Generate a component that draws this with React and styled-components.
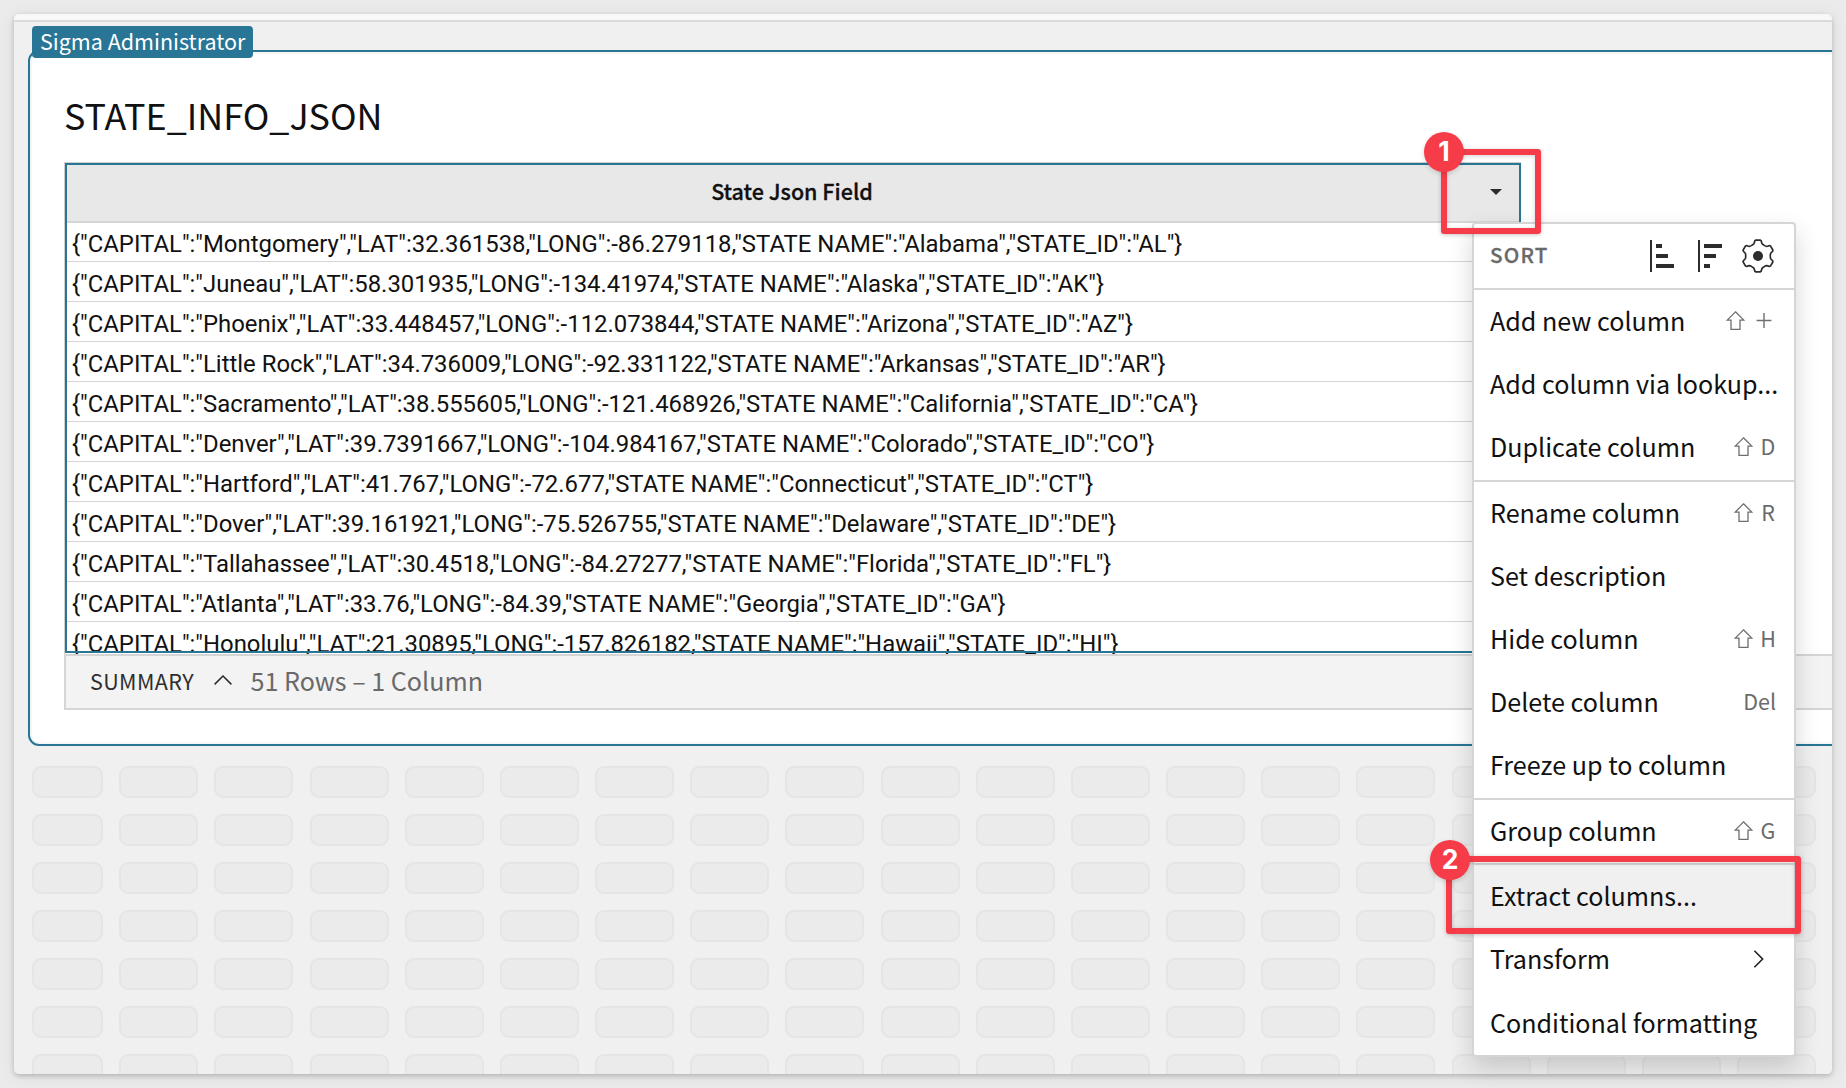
import React from "react";
import styled, { createGlobalStyle, css } from "styled-components";

const teal = "#287596";
const line = "#d5d5d5";
const red = "#f73c49";
const uiFont = '"Noto Sans CJK SC", "Noto Sans", sans-serif';

const GlobalStyle = createGlobalStyle`
  * { box-sizing: border-box; }
  body { margin: 0; background: #ebebeb; font-family: ${uiFont}; color: #111; }
  svg { display: block; flex: none; }
`;

const Stage = styled.div`
  position: relative;
  width: 1846px;
  height: 1088px;
  padding: 14px;
  overflow: hidden;
  background: #ebebeb;
`;

const Workspace = styled.main`
  isolation: isolate;
  height: 1060px;
  border-radius: 5px;
  overflow: hidden;
  background: #f0f0f0;
`;

const WorkspaceShadow = styled.div`
  width: 1818px;
  border-radius: 5px;
  box-shadow: 0 2px 5px rgba(0, 0, 0, 0.2), 0 2px 18px rgba(0, 0, 0, 0.07);
`;

const TopStrip = styled.div`
  height: 8px;
  background: #f8f8f8;
  border-bottom: 2px solid #dadada;
`;

const Element = styled.section`
  position: relative;
  height: 696px;
  margin: 28px -20px 20px 14px;
  padding: 37px 0 0 34px;
  border: 2px solid ${teal};
  border-radius: 11px;
  background: #fff;
  box-shadow: inset 0 0 0 2px #f5f6f6;
`;

const UserTag = styled.div`
  position: absolute;
  left: 2px;
  top: -26px;
  width: 221px;
  height: 32px;
  padding: 0 0 3px 8px;
  border-radius: 4px;
  background: ${teal};
  color: #fff;
  font-size: 21.5px;
  line-height: 29px;
  white-space: nowrap;
`;

const Title = styled.h1`
  margin: 0 0 23px;
  font-size: 35.9px;
  font-weight: 400;
  line-height: 50px;
`;

const Table = styled.div`
  position: relative;
  height: 492px;
  width: 1457px;
  padding: 2px 2px 0;
  border-left: 1px solid #cfcfcf;
  border-top: 1px solid #cfcfcf;
  overflow: hidden;

  &::after {
    content: "";
    position: absolute;
    inset: 0 0 1px 0;
    border: 2px solid ${teal};
  }
`;

const HeaderCell = styled.div`
  position: relative;
  z-index: 1;
  display: flex;
  align-items: center;
  height: 58px;
  padding: 0 17px 2px 27px;
  border-bottom: 2px solid ${line};
  background: #e8e8e8;
`;

const HeaderText = styled.div`
  flex: 1;
  padding-bottom: 3px;
  text-align: center;
  font-size: 21.5px;
  font-weight: 500;
  -webkit-text-stroke: 0.3px #111;
`;

const Rows = styled.div`
  margin-top: -1px;
`;

const Row = styled.div`
  height: 40px;
  padding: 7px 0 2px 5px;
  border-bottom: 1px solid ${line};
  font-family: Roboto, sans-serif;
  font-size: 23.9px;
  line-height: 30px;
  white-space: nowrap;
`;

const SummaryBar = styled.div`
  display: flex;
  align-items: center;
  height: 56px;
  padding: 0 0 4px 24px;
  border: 2px solid ${line};
  background: #f3f3f3;
  white-space: nowrap;
`;

const SummaryLabel = styled.span`
  width: 124px;
  color: #2e2e2e;
  font-size: 21.5px;
  letter-spacing: 0.4px;
`;

const SummaryCount = styled.span`
  margin-left: 18.5px;
  color: #696969;
  font-size: 25.1px;
`;

const Grid = styled.div`
  display: grid;
  grid-template-columns: 71px repeat(18, 79px);
  grid-auto-rows: 32px;
  gap: 16px 16.18px;
  padding-left: 18px;
`;

const Slot = styled.div`
  border: 2px solid #e5e5e5;
  border-radius: 9px;
  background: #ebebeb;
`;

const Menu = styled.nav`
  position: absolute;
  left: 1472px;
  top: 222px;
  width: 324px;
  border: 2px solid ${line};
  border-radius: 4px;
  background: #fff;
  box-shadow: 0 10px 24px rgba(0, 0, 0, 0.16);
`;

const MenuHead = styled.div`
  display: flex;
  align-items: center;
  height: 64px;
  padding: 0 19px 0 16px;
`;

const SortLabel = styled.span`
  flex: 1;
  padding-bottom: 4px;
  color: #696969;
  font-size: 20.6px;
  font-weight: 500;
  letter-spacing: 1.2px;
  -webkit-text-stroke: 0.3px #696969;
`;

const SortIcons = styled.div`
  display: flex;
  align-items: center;
  margin-right: -5px;
`;

const Group = styled.div`
  border-top: 2px solid ${line};
  padding-bottom: ${(p) => p.$bottom}px;
`;

const Item = styled.div`
  display: flex;
  align-items: center;
  justify-content: space-between;
  height: ${(p) => (p.$tall ? 64 : 63)}px;
  padding: ${(p) => (p.$tall ? 1 : 0)}px 18px 3px 16px;
  font-size: 25.1px;
  line-height: 36px;
  white-space: nowrap;
  ${(p) => p.$active && css`background: #f0f0f0;`}
`;

const Shortcut = styled.span`
  display: flex;
  align-items: center;
  gap: 7px;
  color: #6b6b6b;
  font-size: 21.5px;
  line-height: 30px;
`;

const Key = styled.span`
  display: flex;
  justify-content: center;
  width: ${(p) => p.$width || "auto"};
`;

const SubmenuMark = styled.span`
  padding: 2px 12px 0 0;
`;

const Callout = styled.div`
  position: absolute;
  left: ${(p) => p.$x}px;
  top: ${(p) => p.$y}px;
  width: ${(p) => p.$w}px;
  height: ${(p) => p.$h}px;
  border: 6px solid ${red};
  border-radius: 3px;
  box-shadow: 0 1px 4px rgba(0, 0, 0, 0.22), inset 0 1px 4px rgba(0, 0, 0, 0.18);
`;

const Badge = styled.span`
  position: absolute;
  left: ${(p) => p.$dx}px;
  top: ${(p) => p.$dy}px;
  display: flex;
  align-items: center;
  justify-content: center;
  width: 40px;
  height: 40px;
  padding-bottom: 2px;
  border-radius: 50%;
  background: ${red};
  box-shadow: 0 2px 5px rgba(0, 0, 0, 0.15);
  color: #fff;
  font: 700 26.5px/38px Inter, sans-serif;
`;

function SortIcon({ widths }) {
  return (
    <svg width="48" height="32" viewBox="0 0 48 32" fill="#2c2c2c">
      <rect width="2" height="32" />
      {widths.map((w, i) => (
        <rect key={i} x="6" y={4 + i * 10} width={w} height="4" />
      ))}
    </svg>
  );
}

const polar = (r, deg) => {
  const a = (deg * Math.PI) / 180;
  return `${(r * Math.cos(a)).toFixed(2)} ${(r * Math.sin(a)).toFixed(2)}`;
};

const gearPath =
  [0, 1, 2, 3, 4, 5]
    .map((k) => {
      const c = -90 + k * 60;
      return `${k ? "L" : "M"}${polar(13, c - 18)} Q${polar(14, c - 15)} ${polar(14.4, c - 14)} Q${polar(15.8, c - 13)} ${polar(16, c - 8)} L${polar(16, c + 8)} Q${polar(15.8, c + 13)} ${polar(14.4, c + 14)} Q${polar(14, c + 15)} ${polar(13, c + 18)} Q${polar(12.4, c + 21)} ${polar(12.3, c + 30)} Q${polar(12.4, c + 39)} ${polar(13, c + 42)}`;
    })
    .join(" ") + "Z";

const GearIcon = () => (
  <svg width="34" height="34" viewBox="-17 -17 34 34">
    <path d={gearPath} fill="none" stroke="#2c2c2c" strokeWidth="1.7" strokeLinejoin="round" />
    <circle r="5" fill="#2c2c2c" />
  </svg>
);

const ShiftIcon = () => (
  <svg width="19" height="20" viewBox="0 -0.5 19 20" fill="none" stroke="#6f6f6f" strokeWidth="1.3">
    <path d="M9.5 1.3 L17.8 9.6 H14 V18.8 H5 V9.6 H1.2 Z" />
  </svg>
);

const PlusIcon = () => (
  <svg width="16" height="16" viewBox="0 -0.5 16 16" stroke="#6f6f6f" strokeWidth="1.4">
    <path d="M8 .6V15.4M.6 8H15.4" />
  </svg>
);

const groups = [
  {
    bottom: 1,
    items: [
      { label: "Add new column", key: "+" },
      { label: "Add column via lookup..." },
      { label: "Duplicate column", key: "D" },
    ],
  },
  {
    bottom: 1,
    items: [
      { label: "Rename column", key: "R" },
      { label: "Set description" },
      { label: "Hide column", key: "H" },
      { label: "Delete column", key: "Del" },
      { label: "Freeze up to column" },
    ],
  },
  { bottom: 0, items: [{ label: "Group column", key: "G" }] },
  {
    bottom: 0,
    items: [
      { label: "Extract columns...", active: true },
      { label: "Transform", submenu: true },
      { label: "Conditional formatting", tall: true },
    ],
  },
];

const rows = [
  ["Montgomery", "32.361538", "-86.279118", "Alabama", "AL"],
  ["Juneau", "58.301935", "-134.41974", "Alaska", "AK"],
  ["Phoenix", "33.448457", "-112.073844", "Arizona", "AZ"],
  ["Little Rock", "34.736009", "-92.331122", "Arkansas", "AR"],
  ["Sacramento", "38.555605", "-121.468926", "California", "CA"],
  ["Denver", "39.7391667", "-104.984167", "Colorado", "CO"],
  ["Hartford", "41.767", "-72.677", "Connecticut", "CT"],
  ["Dover", "39.161921", "-75.526755", "Delaware", "DE"],
  ["Tallahassee", "30.4518", "-84.27277", "Florida", "FL"],
  ["Atlanta", "33.76", "-84.39", "Georgia", "GA"],
  ["Honolulu", "21.30895", "-157.826182", "Hawaii", "HI"],
];

function ItemShortcut({ value }) {
  if (value === "Del") {
    return <Shortcut>Del</Shortcut>;
  }
  return (
    <Shortcut>
      <ShiftIcon />
      <Key $width={value === "+" ? "24px" : "16px"}>{value === "+" ? <PlusIcon /> : value}</Key>
    </Shortcut>
  );
}

export default function App() {
  return (
    <>
      <GlobalStyle />
      <Stage>
        <WorkspaceShadow>
          <Workspace>
            <TopStrip />
            <Element>
              <UserTag>Sigma Administrator</UserTag>
              <Title>STATE_INFO_JSON</Title>
              <Table>
                <HeaderCell>
                  <HeaderText>State Json Field</HeaderText>
                  <svg width="12" height="6" viewBox="0 0 12 6">
                    <path d="M0 0H12L6 6Z" fill="#2c2c2c" />
                  </svg>
                </HeaderCell>
                <Rows>
                  {rows.map(([capital, lat, long, state, id]) => (
                    <Row key={id}>
                      {`{"CAPITAL":"${capital}","LAT":${lat},"LONG":${long},"STATE NAME":"${state}","STATE_ID":"${id}"}`}
                    </Row>
                  ))}
                </Rows>
              </Table>
              <SummaryBar>
                <SummaryLabel>SUMMARY</SummaryLabel>
                <svg width="18" height="10" viewBox="0 0 18 10" fill="none" stroke="#2c2c2c" strokeWidth="1.5">
                  <path d="M.6 9.4L9 1L17.4 9.4" />
                </svg>
                <SummaryCount>51 Rows – 1 Column</SummaryCount>
              </SummaryBar>
            </Element>
            <Grid>
              {Array.from({ length: 19 * 7 }, (_, i) => (
                <Slot key={i} />
              ))}
            </Grid>
          </Workspace>
        </WorkspaceShadow>

        <Menu>
          <MenuHead>
            <SortLabel>SORT</SortLabel>
            <SortIcons>
              <SortIcon widths={[6, 12, 18]} />
              <SortIcon widths={[18, 12, 6]} />
            </SortIcons>
            <GearIcon />
          </MenuHead>
          {groups.map((group, g) => (
            <Group key={g} $bottom={group.bottom}>
              {group.items.map((item) => (
                <Item key={item.label} $active={item.active} $tall={item.tall}>
                  {item.label}
                  {item.key && <ItemShortcut value={item.key} />}
                  {item.submenu && (
                    <SubmenuMark>
                      <svg width="11" height="18" viewBox="0 0 11 18" fill="none" stroke="#222" strokeWidth="1.6">
                        <path d="M1.4 .8L9.6 9L1.4 17.2" />
                      </svg>
                    </SubmenuMark>
                  )}
                </Item>
              ))}
            </Group>
          ))}
        </Menu>

        <Callout $x={1441} $y={149} $w={100} $h={85}>
          <Badge $dx={-23} $dy={-23}>1</Badge>
        </Callout>
        <Callout $x={1446} $y={856} $w={355} $h={78}>
          <Badge $dx={-22} $dy={-22}>2</Badge>
        </Callout>
      </Stage>
    </>
  );
}
